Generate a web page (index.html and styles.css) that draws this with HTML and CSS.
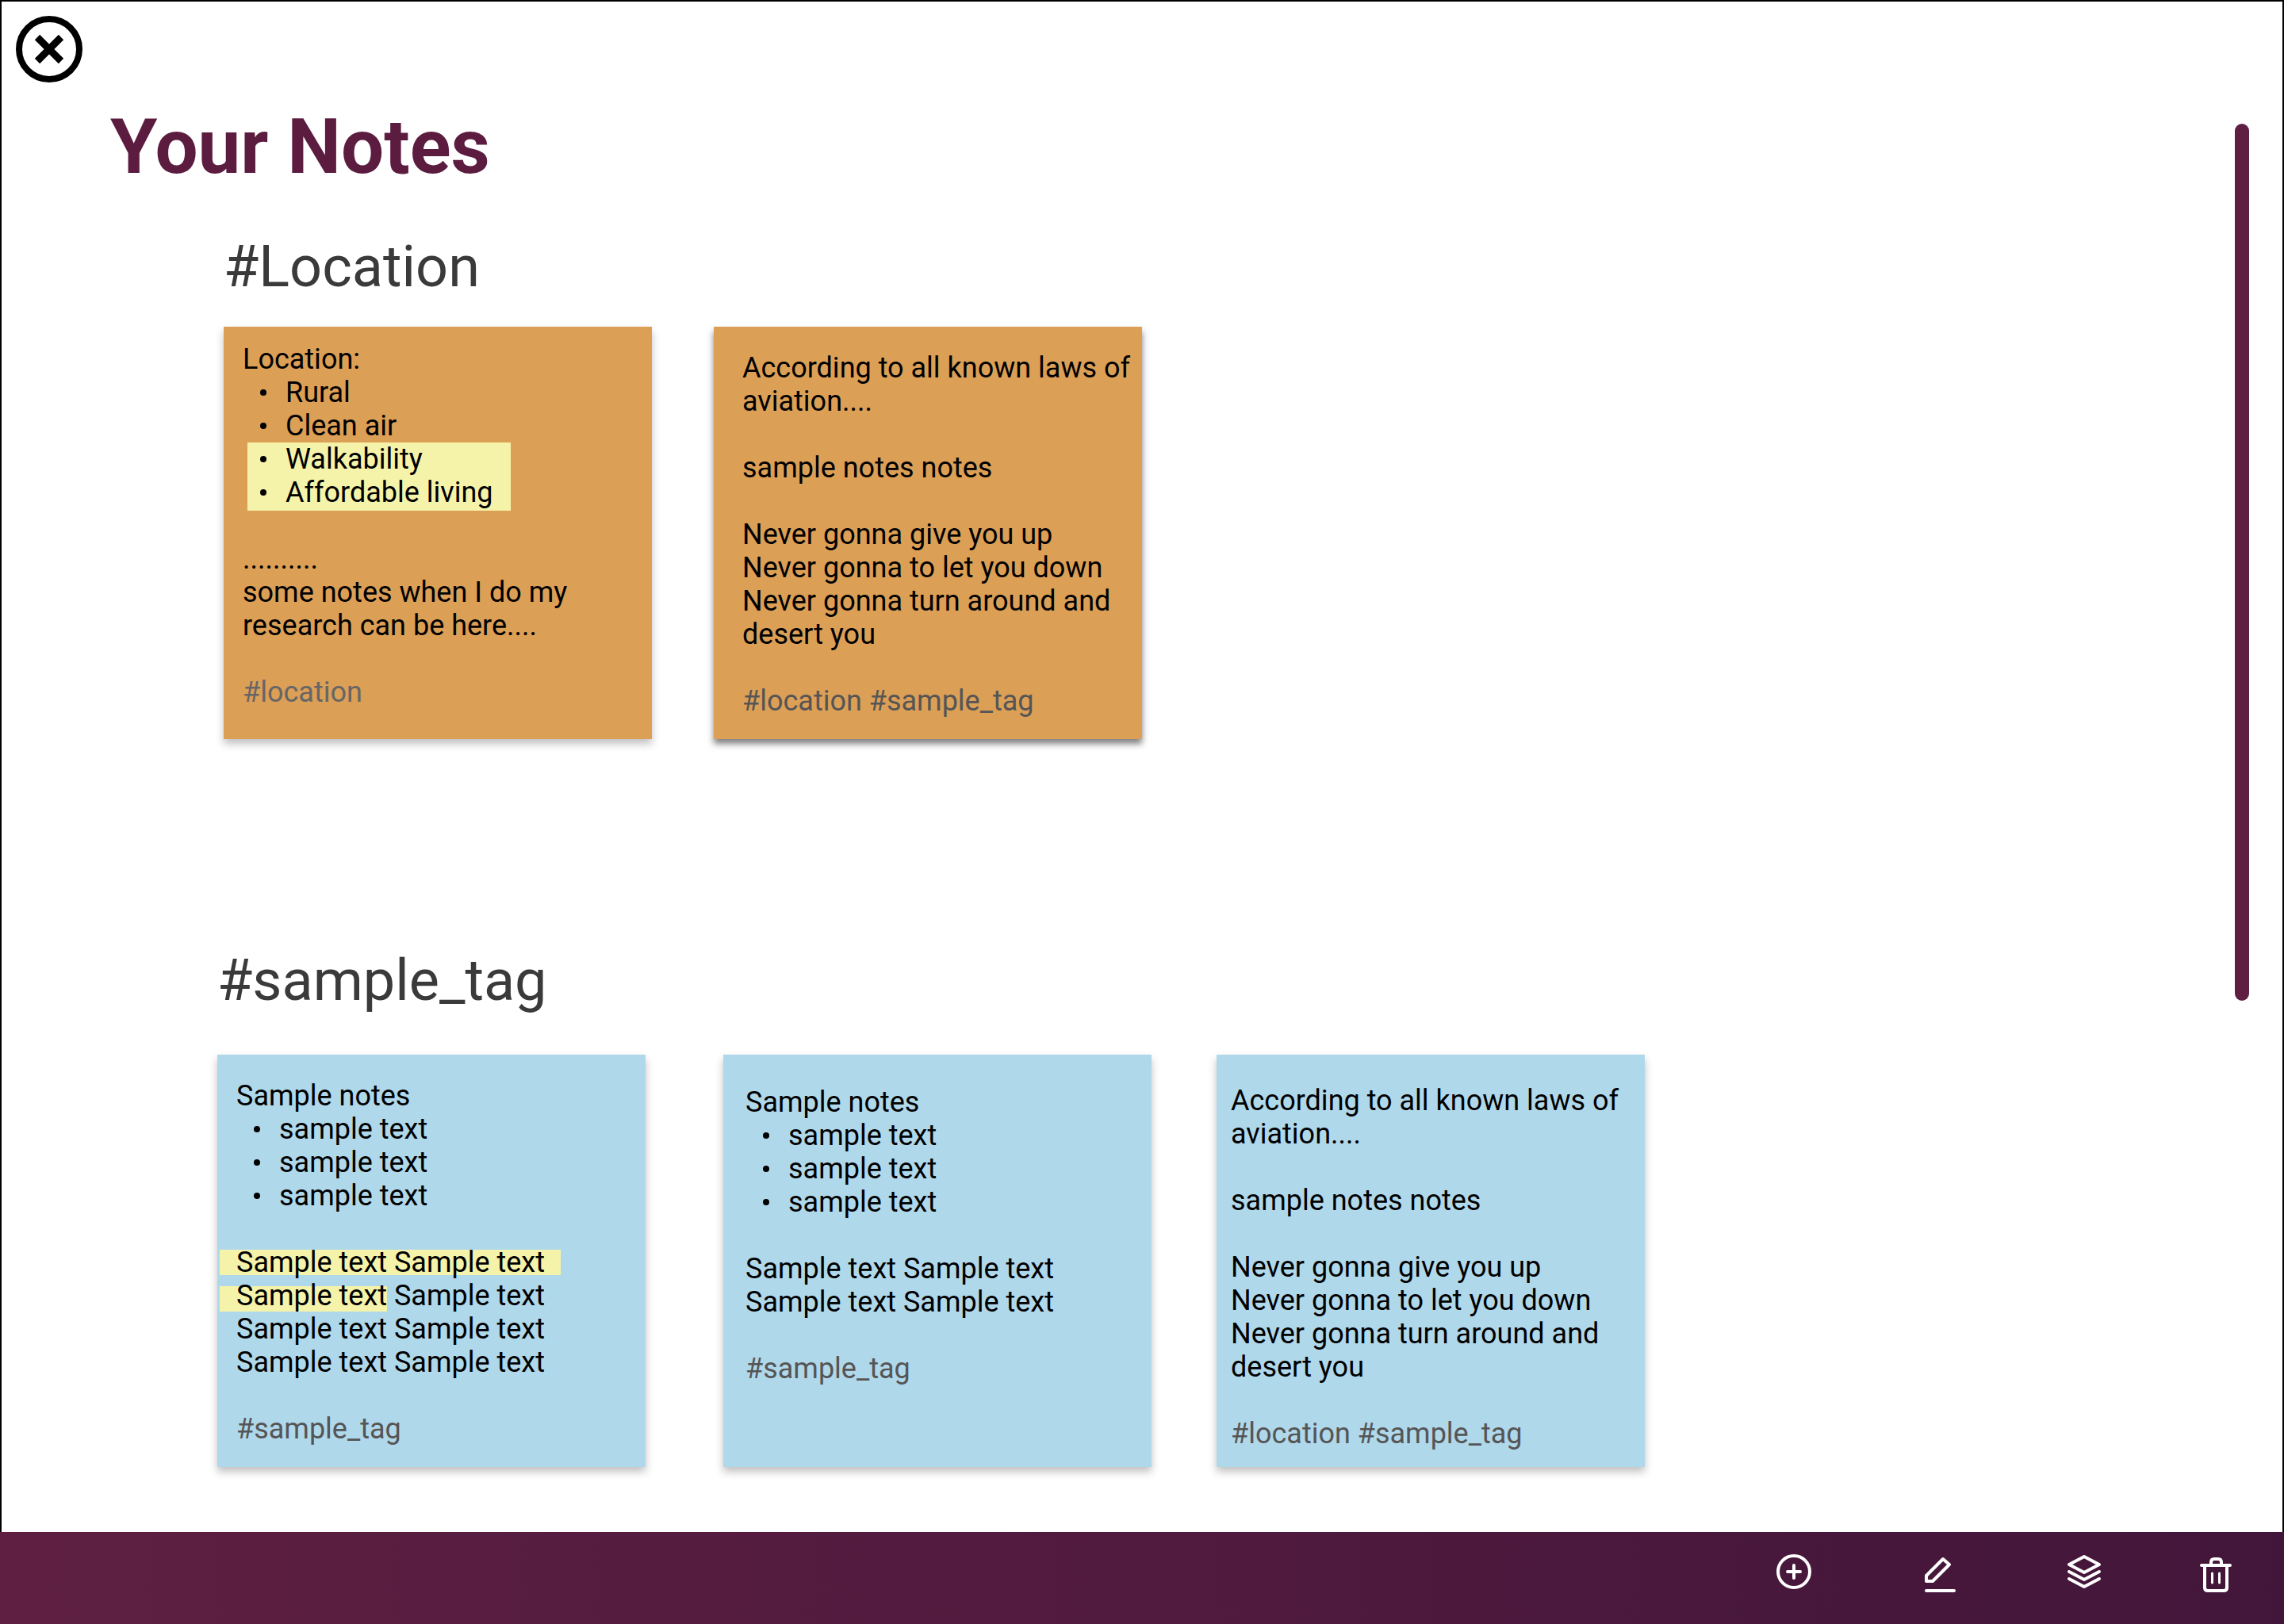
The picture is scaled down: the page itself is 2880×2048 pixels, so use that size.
FILE: index.html
```html
<!DOCTYPE html>
<html>
<head>
  <title>Your Notes</title>
  <link rel="stylesheet" href="styles.css">
</head>
<body>
  <div class="app">
    <main class="content">
      <button class="close-btn">
        <svg width="84" height="84" viewBox="0 0 84 84" fill="none" stroke="#000" stroke-width="8">
          <circle cx="42" cy="42" r="38"/>
          <path d="M27 27 57 57M57 27 27 57" stroke-width="9"/>
        </svg>
      </button>
      <h1>Your Notes</h1>

      <section class="group group-location">
        <h2>#Location</h2>
        <div class="cards">
          <div class="note orange note-a">
            Location:
            <ul>
              <li>Rural</li>
              <li>Clean air</li>
            </ul>
            <ul class="hl-block">
              <li>Walkability</li>
              <li>Affordable living</li>
            </ul>
            <br>
            ..........<br>
            some notes when I do my research can be here....<br>
            <br>
            <span class="tag tag-light">#location</span>
          </div>
          <div class="note orange dark-shadow note-b">
            According to all known laws of aviation....<br>
            <br>
            sample notes notes<br>
            <br>
            Never gonna give you up<br>
            Never gonna to let you down<br>
            Never gonna turn around and desert you<br>
            <br>
            <span class="tag">#location #sample_tag</span>
          </div>
        </div>
      </section>

      <section class="group group-sample">
        <h2>#sample_tag</h2>
        <div class="cards">
          <div class="note blue note-c">
            Sample notes
            <ul>
              <li>sample text</li>
              <li>sample text</li>
              <li>sample text</li>
            </ul>
            <br>
            <span class="hl hl-first">Sample text Sample text</span><br>
            <span class="hl hl-second">Sample text</span> Sample text<br>
            Sample text Sample text<br>
            Sample text Sample text<br>
            <br>
            <span class="tag">#sample_tag</span>
          </div>
          <div class="note blue note-d">
            Sample notes
            <ul>
              <li>sample text</li>
              <li>sample text</li>
              <li>sample text</li>
            </ul>
            <br>
            Sample text Sample text<br>
            Sample text Sample text<br>
            <br>
            <span class="tag">#sample_tag</span>
          </div>
          <div class="note blue note-e">
            According to all known laws of aviation....<br>
            <br>
            sample notes notes<br>
            <br>
            Never gonna give you up<br>
            Never gonna to let you down<br>
            Never gonna turn around and desert you<br>
            <br>
            <span class="tag">#location #sample_tag</span>
          </div>
        </div>
      </section>

      <div class="scrollbar"></div>
    </main>

    <footer class="toolbar">
      <svg class="tool" width="52" height="52" viewBox="0 0 52 52" fill="none" stroke="#fff" stroke-width="4" stroke-linecap="round" stroke-linejoin="round">
        <circle cx="26" cy="24" r="20"/>
        <path d="M26 16V32M18 24H34"/>
      </svg>
      <svg class="tool tool-pencil" width="52" height="52" viewBox="0 0 52 52" fill="none" stroke="#fff" stroke-width="4" stroke-linecap="round" stroke-linejoin="round">
        <path d="M29 8 37 15 16 36H8V29Z"/>
        <path d="M8 48H43"/>
      </svg>
      <svg class="tool tool-layers" width="52" height="52" viewBox="0 0 52 52" fill="none" stroke="#fff" stroke-width="4" stroke-linecap="round" stroke-linejoin="round">
        <path d="M26 5 45 15 26 25 7 15Z"/>
        <path d="M7 24 26 34 45 24"/>
        <path d="M7 33 26 43 45 33"/>
      </svg>
      <svg class="tool tool-last" width="52" height="52" viewBox="0 0 52 52" fill="none" stroke="#fff" stroke-width="4" stroke-linecap="round" stroke-linejoin="round">
        <path d="M8 16H44"/>
        <path d="M20 16V12Q20 8 24 8H29Q33 8 33 12V16"/>
        <path d="M12 16V44Q12 48 16 48H36Q40 48 40 44V16"/>
        <path d="M21.5 26V38M30.5 26V38" stroke-width="3"/>
      </svg>
    </footer>
  </div>
</body>
</html>
```

FILE: styles.css
```css
* { box-sizing: border-box; }
body { margin: 0; font-family: Roboto, sans-serif; background: #fff; }
.app { width: 2880px; height: 2048px; display: flex; flex-direction: column; }

.content { flex: 1; position: relative; border: 2px solid #000; border-bottom: 0; overflow: hidden; }
.close-btn { display: block; margin: 18px 0 0 18px; padding: 0; border: 0; background: none; line-height: 0; }

h1 { margin: 25px 0 0 137px; font-size: 96px; line-height: 112px; font-weight: 700; color: #5c1c40; }
h2 { margin: 0; font-size: 72px; line-height: 84px; font-weight: 400; color: #3a3a3a; }

.group-location { margin-top: 54px; padding-left: 280px; }
.group-location h2 { margin: 0 0 33px 0; }
.group-location .cards { gap: 78px; }
.group-sample { margin-top: 263px; padding-left: 272px; }
.group-sample h2 { margin: 0 0 51px 0; }

.cards { display: flex; }
.note-c { margin-right: 98px; }
.note-d { margin-right: 82px; }

.note { width: 540px; height: 520px; font-size: 36px; line-height: 42px; color: #000; box-shadow: 0 6px 10px rgba(0,0,0,0.25); }
.orange { background: #dc9f56; }
.blue { background: #b0d8eb; }
.dark-shadow { box-shadow: 0 6px 8px rgba(0,0,0,0.5); }

.note-a { padding: 20px 20px 0 24px; }
.note-b { padding: 31px 4px 0 36px; }
.note-c { padding: 31px 20px 0 24px; }
.note-d { padding: 39px 20px 0 28px; }
.note-e { padding: 37px 20px 0 18px; }

.note ul { margin: 0; padding: 0 0 0 54px; list-style: none; }
.note li { position: relative; }
.note li::before { content: ""; position: absolute; left: -32px; top: 17px; width: 8px; height: 8px; border-radius: 50%; background: #000; }
.note .hl-block { width: 332px; margin: 0 0 -2px 6px; padding: 0 0 2px 48px; background: #f5f3a9; }

.hl { display: inline-block; margin-left: -21px; padding-left: 21px; background: linear-gradient(#f5f3a9, #f5f3a9) no-repeat; background-size: 100% 32px; }
.hl-first { padding-right: 20px; background-position: 0 5px; }
.hl-second { padding-right: 0; background-position: 0 9px; }

.tag { color: #555; }
.tag-light { color: #666; }

.scrollbar { position: absolute; top: 154px; right: 42px; width: 18px; height: 1106px; border-radius: 9px; background: #5e1f42; }

.toolbar { height: 116px; display: flex; justify-content: flex-end; align-items: flex-start; padding: 26px 60px 0 0; background: linear-gradient(90deg, #5e1f42, #42163a); }
.tool { margin-left: 132px; }
.tool-pencil { margin-left: 133px; }
.tool-layers { margin-left: 129px; }
.tool-last { margin-left: 114px; }
```
